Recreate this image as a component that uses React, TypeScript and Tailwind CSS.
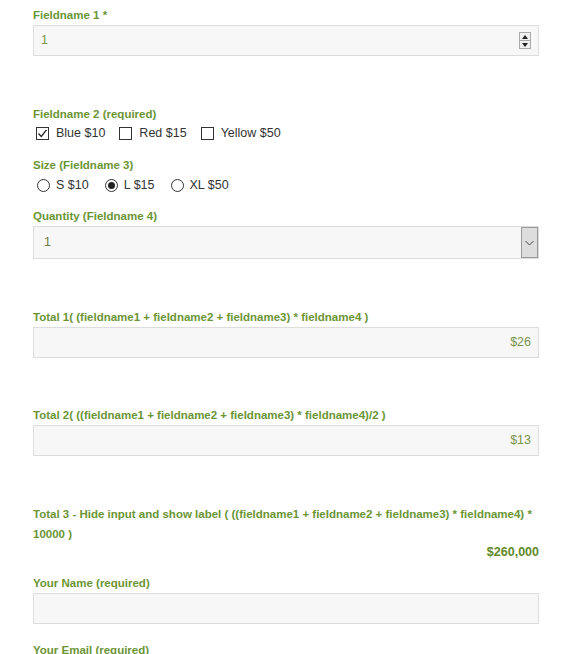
import React from 'react';

const font = { fontFamily: '"Liberation Sans", Arial, sans-serif' };

function Label({ children, className = '' }: { children: React.ReactNode; className?: string }) {
  return <div className={`text-[11.5px] font-bold leading-[20px] text-[#6b9535] ${className}`}>{children}</div>;
}

function Box({ value, right, children }: { value?: string; right?: boolean; children?: React.ReactNode }) {
  return (
    <div className="flex h-[31px] items-center border border-[#dddddd] bg-[#f7f7f7] px-[7px] text-[12.5px] text-[#7a9450]">
      <span className="flex-1" style={{ textAlign: right ? 'right' : 'left' }}>{value}</span>
      {children}
    </div>
  );
}

function Check({ checked, label }: { checked?: boolean; label: string }) {
  return (
    <span className="flex items-center gap-[7px]">
      <span className="flex h-[13px] w-[13px] items-center justify-center border border-[#333] bg-white">
        {checked && (
          <svg width="11" height="11" viewBox="0 0 11 11">
            <path d="M1.5 5.5 L4.3 8.5 L9.5 1.8" fill="none" stroke="#222" strokeWidth="1.3" />
          </svg>
        )}
      </span>
      <span>{label}</span>
    </span>
  );
}

function Radio({ checked, label }: { checked?: boolean; label: string }) {
  return (
    <span className="flex items-center gap-[6px]">
      <span className="flex h-[13px] w-[13px] items-center justify-center rounded-full border border-[#333] bg-white">
        {checked && <span className="h-[7px] w-[7px] rounded-full bg-[#222]" />}
      </span>
      <span>{label}</span>
    </span>
  );
}

export default function App() {
  return (
    <div className="min-h-[654px] bg-white" style={font}>
      <div className="ml-[33px] w-[506px] pt-[5px] text-[12px] text-[#444]">
        <Label>Fieldname 1 *</Label>
        <Box value="1">
          <span className="flex h-[17px] w-[12px] flex-col border border-[#aaa] bg-[#f0f0f0]">
            <span className="flex flex-1 items-center justify-center border-b border-[#aaa]">
              <svg width="6" height="4" viewBox="0 0 6 4"><path d="M0 4 L3 0 L6 4Z" fill="#222" /></svg>
            </span>
            <span className="flex flex-1 items-center justify-center">
              <svg width="6" height="4" viewBox="0 0 6 4"><path d="M0 0 L3 4 L6 0Z" fill="#222" /></svg>
            </span>
          </span>
        </Box>

        <Label className="mt-[48px]">Fieldname 2 (required)</Label>
        <div className="flex h-[18px] items-center gap-[14px] pl-[3px] text-[12.5px] text-[#333]">
          <Check checked label="Blue $10" />
          <Check label="Red $15" />
          <Check label="Yellow $50" />
        </div>

        <Label className="mt-[13px]">Size (Fieldname 3)</Label>
        <div className="flex h-[20px] items-center gap-[16px] pl-[4px] text-[12.5px] text-[#333]">
          <Radio label="S $10" />
          <Radio checked label="L $15" />
          <Radio label="XL $50" />
        </div>

        <Label className="mt-[11px]">Quantity (Fieldname 4)</Label>
        <div className="flex h-[33px] items-center border border-[#dddddd] bg-[#f7f7f7] pl-[10px] text-[12.5px] text-[#6b8040]">
          <span className="flex-1">1</span>
          <span className="flex h-full w-[17px] items-center justify-center border border-[#999] bg-[#dddddd]">
            <svg width="9" height="6" viewBox="0 0 9 6"><path d="M0.5 1 L4.5 5 L8.5 1" fill="none" stroke="#444" strokeWidth="1" /></svg>
          </span>
        </div>

        <Label className="mt-[48px]">Total 1( (fieldname1 + fieldname2 + fieldname3) * fieldname4 )</Label>
        <Box value="$26" right />

        <Label className="mt-[47px]">Total 2( ((fieldname1 + fieldname2 + fieldname3) * fieldname4)/2 )</Label>
        <Box value="$13" right />

        <Label className="mt-[48px]">Total 3 - Hide input and show label ( ((fieldname1 + fieldname2 + fieldname3) * fieldname4) * 10000 )</Label>
        <div className="h-[16px] text-right text-[12.5px] font-bold leading-[16px] text-[#5f8a2a]">$260,000</div>

        <Label className="mt-[13px]">Your Name (required)</Label>
        <Box />

        <Label className="mt-[16px]">Your Email (required)</Label>
        <Box />
      </div>
    </div>
  );
}
